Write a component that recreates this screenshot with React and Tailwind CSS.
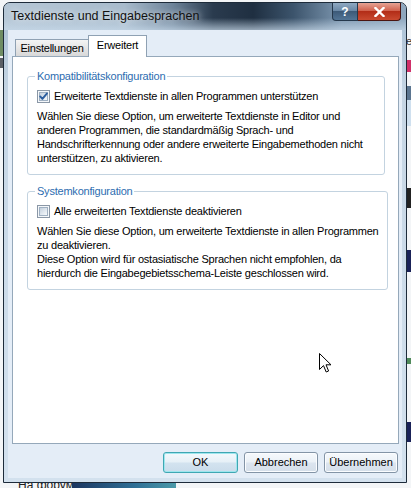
const F = "font-['Liberation_Sans',Arial,sans-serif]";

function Checkbox({ checked }) {
  return (
    <span className="relative inline-flex h-[13px] w-[13px] shrink-0 items-center justify-center border border-[#8a97a6] bg-[#f4f7fa]">
      <span className="h-[9px] w-[9px] border border-[#9fb0c2] bg-[linear-gradient(135deg,#c4d0dd_0%,#e7edf3_70%,#f7f9fb_100%)]" />
      {checked && (
        <svg className="absolute left-[0px] top-[0px]" width="11" height="11" viewBox="0 0 11 11">
          <path d="M2.2 5.4 L4.4 7.9 L9 2.4" fill="none" stroke="#2b5d9e" strokeWidth="1.9" strokeLinecap="round" strokeLinejoin="round" />
        </svg>
      )}
    </span>
  );
}

function Btn({ children, def }) {
  return (
    <button
      className={
        def
          ? "h-[21px] w-[75px] rounded-[3px] border border-[#3fa7b3] bg-[linear-gradient(180deg,#f3f9fc_0%,#e6f0f7_48%,#d3e3ef_52%,#cadceb_100%)] text-[11px] leading-none text-black shadow-[inset_0_0_0_1px_#9ee6ee]"
          : "h-[21px] w-[74px] rounded-[3px] border border-[#8394a6] bg-[linear-gradient(180deg,#f6f9fc_0%,#ebf1f7_48%,#dce5ef_52%,#d5dfea_100%)] text-[11px] leading-none text-black shadow-[inset_0_0_0_1px_#fbfdff]"
      }
    >
      {children}
    </button>
  );
}

function Group({ title, checkbox, checked, lines }) {
  return (
    <fieldset className="rounded-[3px] border border-[#c3d3e0] px-[9px] pb-[9px]">
      <legend className="-ml-[2px] px-[2px] text-[11px] leading-[13px] text-[#2d6db0] tracking-[-0.22px]">{title}</legend>
      <div className="mt-[6px] flex h-[14px] items-center gap-[4px]">
        <Checkbox checked={checked} />
        <span className="text-[11px] leading-[14px] text-black tracking-[-0.22px] whitespace-nowrap">{checkbox}</span>
      </div>
      <div className="mt-[6px] text-[11px] leading-[14px] text-black tracking-[-0.22px] whitespace-nowrap">
        {lines.map((l, i) => (
          <div key={i}>{l}</div>
        ))}
      </div>
    </fieldset>
  );
}

export default function App() {
  return (
    <div className={`relative h-[488px] w-[411px] overflow-hidden bg-[#f3f5f7] ${F}`}>
      {/* desktop behind the window */}
      <div className="absolute left-0 top-[30px] h-[26px] w-[4px] bg-[#6f8d63]" />
      <div className="absolute left-0 top-[58px] h-[10px] w-[4px] bg-[#5a5f66]" />
      <div className="absolute left-[406px] top-[36px] text-[11px] leading-[11px] text-[#333]">e</div>
      <div className="absolute left-[406px] top-[60px] h-[12px] w-[5px] bg-[#d0306a]" />
      <div className="absolute left-[406px] top-[86px] h-[14px] w-[5px] bg-[#5b7590]" />
      <div className="absolute left-[406px] top-[100px] h-[26px] w-[5px] bg-[#cfe0ef]" />
      <div className="absolute left-[406px] top-[188px] h-[20px] w-[5px] bg-[#222]" />
      <div className="absolute left-[406px] top-[250px] h-[22px] w-[5px] bg-[#1a2258]" />
      <div className="absolute left-[406px] top-[358px] h-[6px] w-[5px] bg-[#4f8a5a]" />
      <div className="absolute left-[406px] top-[422px] h-[20px] w-[5px] bg-[#1a2258]" />
      <div className="absolute left-[18px] top-[479px] text-[12px] leading-[12px] text-[#222]">На форум</div>
      <div className="absolute left-[72px] top-[483px] h-[5px] w-[104px] bg-[linear-gradient(90deg,#1c3660_0%,#2f6f95_60%,#4c9aa9_100%)]" />

      {/* window */}
      <div className="absolute left-[3px] top-[2px] flex h-[481px] w-[404px] flex-col rounded-t-[7px] border border-[#1d2b3a] bg-[linear-gradient(180deg,#a9bfd3_0%,#c6d6e5_20%,#d3e1ee_100%)]">
        {/* title bar */}
        <div className="relative flex h-[27px] shrink-0 rounded-t-[6px] bg-[linear-gradient(180deg,rgba(255,255,255,0)_0%,rgba(255,255,255,0)_55%,rgba(200,218,234,0.7)_100%),linear-gradient(90deg,#b6c7d6_0%,#a8bbcc_30%,#6d8399_42%,#2a3b4e_52%,#1f2f41_62%,#3c546c_72%,#7d97b0_84%,#8fa7be_100%)]">
          <div className="flex flex-1 items-center pl-[7px] text-[12.5px] leading-none text-[#111] [text-shadow:0_0_6px_rgba(255,255,255,0.95)]">
            Textdienste und Eingabesprachen
          </div>
          <div className="mr-[5px] flex self-start">
            <div className="flex h-[18px] w-[26px] items-center justify-center rounded-bl-[4px] border border-t-0 border-[#25384c] bg-[linear-gradient(180deg,#8fa9c2_0%,#6a88a6_45%,#3d5a78_50%,#527495_100%)] text-[12px] font-bold leading-none text-white">
              ?
            </div>
            <div className="flex h-[18px] w-[43px] items-center justify-center rounded-br-[4px] border border-l-0 border-t-0 border-[#4a1410] bg-[linear-gradient(180deg,#e6a394_0%,#d1634f_45%,#b32d18_50%,#c94a30_100%)]">
              <svg width="11" height="10" viewBox="0 0 11 10">
                <path d="M1.5 1 L9.5 9 M9.5 1 L1.5 9" stroke="#fff" strokeWidth="2.4" strokeLinecap="square" />
              </svg>
            </div>
          </div>
        </div>

        {/* client */}
        <div className="mx-[4px] mb-[4px] flex flex-1 flex-col bg-[#e4edf7] pl-[4px] pr-[3px] pt-[5px]">
          <div className="flex h-[21px] items-end pl-[3px]">
            <div className="flex h-[17px] w-[74px] items-center justify-center border border-b-0 border-[#8fa1b3] bg-[linear-gradient(180deg,#f4f4f4_0%,#e6e6e6_50%,#d8d8d8_100%)] text-[11px] leading-none text-black tracking-[-0.22px]">
              Einstellungen
            </div>
            <div className="relative z-10 -mb-px -ml-px flex h-[22px] w-[59px] items-start justify-center border border-b-0 border-[#8fa1b3] bg-white pt-[4px] text-[11px] leading-none text-black tracking-[-0.22px]">
              Erweitert
            </div>
          </div>
          <div className="flex h-[388px] flex-col gap-[10px] border border-[#95a8ba] bg-white pl-[14px] pr-[13px] pt-[13px]">
            <Group
              title="Kompatibilitätskonfiguration"
              checkbox="Erweiterte Textdienste in allen Programmen unterstützen"
              checked
              lines={[
                "Wählen Sie diese Option, um erweiterte Textdienste in Editor und",
                "anderen Programmen, die standardmäßig Sprach- und",
                "Handschrifterkennung oder andere erweiterte Eingabemethoden nicht",
                "unterstützen, zu aktivieren.",
              ]}
            />
            <Group
              title="Systemkonfiguration"
              checkbox="Alle erweiterten Textdienste deaktivieren"
              lines={[
                "Wählen Sie diese Option, um erweiterte Textdienste in allen Programmen",
                "zu deaktivieren.",
                "Diese Option wird für ostasiatische Sprachen nicht empfohlen, da",
                "hierdurch die Eingabegebietsschema-Leiste geschlossen wird.",
              ]}
            />
          </div>
          <div className="mt-[8px] flex justify-end gap-[6px] pr-[1px]">
            <Btn def>OK</Btn>
            <Btn>Abbrechen</Btn>
            <Btn>Übernehmen</Btn>
          </div>
        </div>
      </div>

      {/* mouse cursor */}
      <svg className="absolute left-[319px] top-[353px]" width="13" height="21" viewBox="0 0 13 21">
        <path d="M0.5 0.5 L0.5 16.5 L4.5 12.6 L7.2 19 L9.6 18 L7 11.8 L12 11.8 Z" fill="#fff" stroke="#000" strokeWidth="1" strokeLinejoin="miter" />
      </svg>
    </div>
  );
}
